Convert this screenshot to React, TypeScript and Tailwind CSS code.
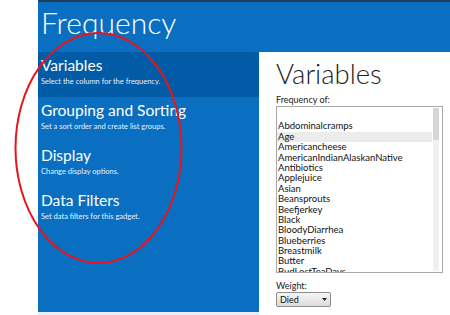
import React from 'react';

const fields = [
  '',
  'Abdominalcramps',
  'Age',
  'Americancheese',
  'AmericanIndianAlaskanNative',
  'Antibiotics',
  'Applejuice',
  'Asian',
  'Beansprouts',
  'Beefjerkey',
  'Black',
  'BloodyDiarrhea',
  'Blueberries',
  'Breastmilk',
  'Butter',
  'BudLostTeaDays',
];

const sections = [
  { title: 'Variables', hint: 'Select the column for the frequency.', active: true },
  { title: 'Grouping and Sorting', hint: 'Set a sort order and create list groups.' },
  { title: 'Display', hint: 'Change display options.' },
  { title: 'Data Filters', hint: 'Set data filters for this gadget.' },
];

const NavItem: React.FC<{ title: string; hint: string; active?: boolean }> = ({ title, hint, active }) => (
  <div className={`h-[45px] pl-[3px] pt-[4px] ${active ? 'bg-[#015ba6]' : ''}`}>
    <div className="text-[15.5px] leading-[19px] text-white">{title}</div>
    <div className="mt-[2px] text-[7.5px] leading-[10px] text-white/90">{hint}</div>
  </div>
);

export default function App() {
  return (
    <div
      className="relative flex h-[315px] w-[450px] overflow-hidden bg-white"
      style={{ fontFamily: 'Lato, "Open Sans", sans-serif' }}
    >
      <div className="w-[38px] shrink-0" />
      <div className="flex flex-1 flex-col">
        <div className="h-[2px] bg-[#203d5e]" />
        <div className="h-[50px] bg-[#0a6fc1] pl-[3px]">
          <div className="text-[30px] font-light leading-[40px] text-white">Frequency</div>
        </div>
        <div className="flex flex-1">
          <div className="flex w-[221px] flex-col">
            <div className="flex-1 bg-[#0a6fc1]">
              {sections.map((s) => (
                <NavItem key={s.title} {...s} />
              ))}
            </div>
            <div className="h-[3px] bg-[#e6eef7]" />
          </div>
          <div className="flex-1 bg-white pl-[17px] pt-[3px]">
            <div className="text-[27.5px] font-light leading-[37px] text-[#222]">Variables</div>
            <div className="mt-[2px] text-[9px] leading-[11px] text-[#222]">Frequency of:</div>
            <div className="relative mt-[1px] h-[167px] w-[167px] overflow-hidden border border-[#a9a9a9] bg-white">
              <div className="absolute right-[3px] top-[1px] bottom-[1px] w-[6px] bg-[#f0f0f0]">
                <div className="h-[32px] w-full bg-[#d6d6d6]" />
              </div>
              <div className="pt-[4px]">
                {fields.map((f, i) => (
                  <div
                    key={i}
                    className={`h-[10.4px] pl-[1px] text-[9.5px] leading-[10.4px] text-[#111] ${
                      f === 'Age' ? 'mr-[10px] bg-[#ececec]' : ''
                    }`}
                  >
                    {f}
                  </div>
                ))}
              </div>
            </div>
            <div className="mt-[7px] text-[9px] leading-[11px] text-[#222]">Weight:</div>
            <div className="mt-[1px] flex h-[15px] w-[55px] items-center justify-between rounded-[2px] border border-[#8c8c8c] bg-gradient-to-b from-[#f6f6f6] to-[#dcdcdc] px-[3px]">
              <span className="text-[9px] leading-[11px] text-[#111]">Died</span>
              <svg width="5" height="3" viewBox="0 0 5 3">
                <path d="M0 0h5L2.5 3z" fill="#222" />
              </svg>
            </div>
          </div>
        </div>
      </div>
      <svg className="pointer-events-none absolute left-0 top-0" width="450" height="315">
        <ellipse cx="98.5" cy="148" rx="83" ry="115" fill="none" stroke="#e8141b" strokeWidth="2" />
      </svg>
    </div>
  );
}
